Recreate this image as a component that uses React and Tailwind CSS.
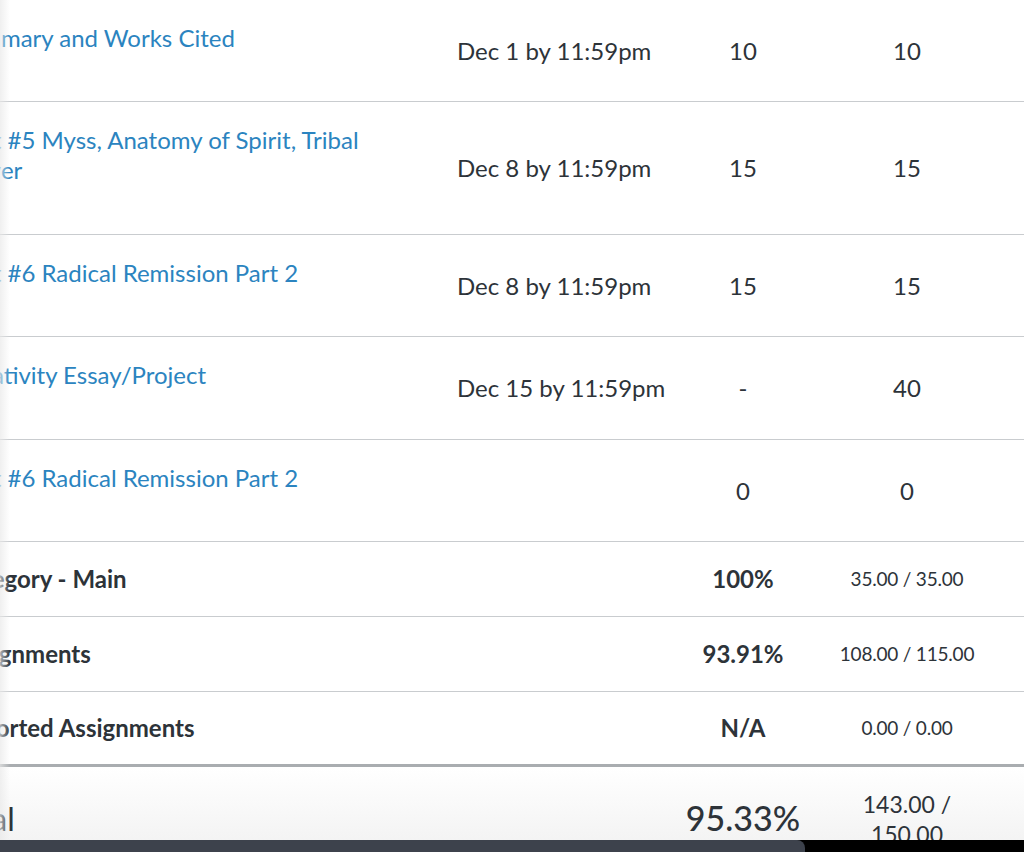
import React from 'react';

// Grades table, scrolled so the name column is cut at the left edge.
const assignments = [
  { name: 'Summary and Works Cited', due: 'Dec 1 by 11:59pm', score: '10', outOf: '10', pb: 'pb-[48px]' },
  { name: 'Post #5 Myss, Anatomy of Spirit, Tribal Power', due: 'Dec 8 by 11:59pm', score: '15', outOf: '15', pb: 'pb-[49px]' },
  { name: 'Post #6 Radical Remission Part 2', due: 'Dec 8 by 11:59pm', score: '15', outOf: '15', pb: 'pb-[48px]' },
  { name: 'Creativity Essay/Project', due: 'Dec 15 by 11:59pm', score: '-', outOf: '40', pb: 'pb-[49px]' },
  { name: 'Post #6 Radical Remission Part 2', due: '', score: '0', outOf: '0', pb: 'pb-[48px]' },
];

const groups = [
  { name: 'Category - Main', pct: '100%', ratio: '35.00 / 35.00' },
  { name: 'Assignments', pct: '93.91%', ratio: '108.00 / 115.00' },
  { name: 'Imported Assignments', pct: 'N/A', ratio: '0.00 / 0.00' },
];

function AssignmentRow({ a }) {
  return (
    <div className="flex border-b border-[#c9cccf]">
      <div className={`w-[502px] shrink-0 pt-[23px] pr-[79px] ${a.pb}`}>
        <a className="block text-[24px] leading-[30px] text-[#2b84c0]">{a.name}</a>
      </div>
      <div className="w-[220px] shrink-0 flex items-center text-[24px] text-[#2d3339]">{a.due}</div>
      <div className="w-[132px] shrink-0 flex items-center justify-center text-[24px] text-[#2d3339]">{a.score}</div>
      <div className="w-[196px] shrink-0 flex items-center justify-center text-[24px] text-[#2d3339]">{a.outOf}</div>
    </div>
  );
}

function GroupRow({ g, last }) {
  return (
    <div className={`flex h-[75px] ${last ? 'border-b-[3px] border-[#a9adb0]' : 'border-b border-[#c9cccf]'}`}>
      <div className="w-[722px] shrink-0 flex items-center text-[24px] font-bold text-[#2d3339]">{g.name}</div>
      <div className="w-[132px] shrink-0 flex items-center justify-center text-[24px] font-bold text-[#2d3339]">{g.pct}</div>
      <div className="w-[196px] shrink-0 flex items-center justify-center text-[19px] tracking-[-0.2px] text-[#2d3339]">{g.ratio}</div>
    </div>
  );
}

export default function App() {
  return (
    <div className="relative h-[852px] w-[1024px] overflow-hidden bg-white font-['Lato','Liberation_Sans',sans-serif]">
      <div className="-ml-[45px]">
        {assignments.map((a, i) => <AssignmentRow key={i} a={a} />)}
        {groups.map((g, i) => <GroupRow key={i} g={g} last={i === groups.length - 1} />)}
        <div className="flex h-[90px] bg-gradient-to-b from-white to-[#f1f1f1]">
          <div className="w-[722px] shrink-0 pt-[32px] text-[32px] leading-[40px] text-[#2d3339]">
            <span className="-ml-[8px]">Total</span>
          </div>
          <div className="w-[132px] shrink-0 pt-[31px] text-center text-[34px] leading-[40px] font-medium text-[#2d3339]">95.33%</div>
          <div className="w-[196px] shrink-0 pt-[22px] text-center text-[23px] leading-[30px] text-[#2d3339]">143.00 /<br />150.00</div>
        </div>
      </div>

      {/* faint shade where the page scrolls under the left edge */}
      <div className="pointer-events-none absolute inset-y-0 left-0 w-[10px] bg-gradient-to-r from-[#e9e9e9]/70 to-transparent" />

      {/* device bar over the bottom edge */}
      <div className="absolute bottom-0 left-0 right-0 flex h-[12px] bg-black">
        <div className="w-[805px] rounded-tr-[8px] bg-[#3d424c]" />
      </div>
    </div>
  );
}
